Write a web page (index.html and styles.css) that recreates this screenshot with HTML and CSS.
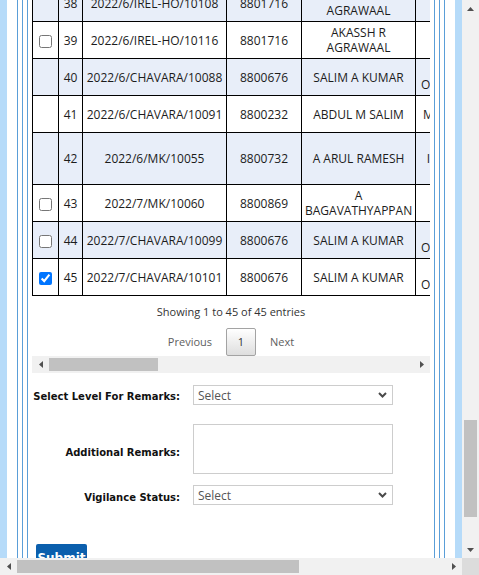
FILE: index.html
```html
<!DOCTYPE html>
<html lang="en">
<head>
<meta charset="utf-8">
<title>Vigilance Remarks</title>
<link rel="stylesheet" href="styles.css">
</head>
<body>
<div class="screen">
  <div class="page">
    <div class="sheet">
      <div class="box"><div class="box"><div class="box">
        <div class="grid-area">
          <div class="table-clip">
            <table class="grid">
              <colgroup>
                <col class="c-chk"><col class="c-no"><col class="c-ref"><col class="c-emp"><col class="c-name"><col class="c-desg">
              </colgroup>
              <tbody>
                <tr class="alt"><td></td><td>38</td><td>2022/6/IREL-HO/10108</td><td>8801716</td><td>AKASSH R AGRAWAAL</td><td></td></tr>
                <tr><td><input type="checkbox"></td><td>39</td><td>2022/6/IREL-HO/10116</td><td>8801716</td><td>AKASSH R AGRAWAAL</td><td></td></tr>
                <tr class="alt"><td></td><td>40</td><td>2022/6/CHAVARA/10088</td><td>8800676</td><td>SALIM A KUMAR</td><td>CHAVARA<br>OFFICE SUPERINTENDENT</td></tr>
                <tr><td></td><td>41</td><td>2022/6/CHAVARA/10091</td><td>8800232</td><td>ABDUL M SALIM</td><td>MANAGER (OPERATIONS)</td></tr>
                <tr class="alt tall"><td></td><td>42</td><td>2022/6/MK/10055</td><td>8800732</td><td>A ARUL RAMESH</td><td>INSPECTOR (VIGILANCE)</td></tr>
                <tr><td><input type="checkbox"></td><td>43</td><td>2022/7/MK/10060</td><td>8800869</td><td>A BAGAVATHYAPPAN</td><td></td></tr>
                <tr class="alt"><td><input type="checkbox"></td><td>44</td><td>2022/7/CHAVARA/10099</td><td>8800676</td><td>SALIM A KUMAR</td><td>CHAVARA<br>OFFICE SUPERINTENDENT</td></tr>
                <tr><td><input type="checkbox" checked></td><td>45</td><td>2022/7/CHAVARA/10101</td><td>8800676</td><td>SALIM A KUMAR</td><td>CHAVARA<br>OFFICE SUPERINTENDENT</td></tr>
              </tbody>
            </table>
          </div>
          <div class="info">Showing 1 to 45 of 45 entries</div>
          <div class="paging">
            <a class="pg-btn disabled">Previous</a>
            <a class="pg-btn current">1</a>
            <a class="pg-btn disabled">Next</a>
          </div>
          <div class="hbar inner-bar">
            <span class="arrow"><svg width="4" height="7" viewBox="0 0 4 7"><polygon points="4,0 4,7 0,3.5" fill="#505050"/></svg></span>
            <span class="htrack"><span class="hthumb inner-thumb"></span></span>
            <span class="arrow"><svg width="4" height="7" viewBox="0 0 4 7"><polygon points="0,0 0,7 4,3.5" fill="#505050"/></svg></span>
          </div>
        </div>
        <form class="form">
          <div class="form-row r1">
            <label>Select Level For Remarks:</label>
            <span class="select-wrap">
              <select><option>Select</option></select>
              <svg class="chev" width="9" height="6" viewBox="0 0 9 6"><polyline points="1,1 4.5,4.5 8,1" fill="none" stroke="#4a4a4a" stroke-width="2"/></svg>
            </span>
          </div>
          <div class="form-row r2">
            <label>Additional Remarks:</label>
            <textarea></textarea>
          </div>
          <div class="form-row r3">
            <label>Vigilance Status:</label>
            <span class="select-wrap">
              <select><option>Select</option></select>
              <svg class="chev" width="9" height="6" viewBox="0 0 9 6"><polyline points="1,1 4.5,4.5 8,1" fill="none" stroke="#4a4a4a" stroke-width="2"/></svg>
            </span>
          </div>
          <button type="button" class="btn-submit">Submit</button>
        </form>
      </div></div></div>
    </div>
  </div>
  <div class="vscroll">
    <span class="arrow"><svg width="7" height="4" viewBox="0 0 7 4"><polygon points="0,4 3.5,0 7,4" fill="#505050"/></svg></span>
    <span class="vtrack"><span class="vthumb"></span></span>
    <span class="arrow"><svg width="7" height="4" viewBox="0 0 7 4"><polygon points="0,0 7,0 3.5,4" fill="#505050"/></svg></span>
  </div>
  <div class="hbar page-bar">
    <span class="arrow"><svg width="4" height="7" viewBox="0 0 4 7"><polygon points="4,0 4,7 0,3.5" fill="#505050"/></svg></span>
    <span class="htrack"><span class="hthumb page-thumb"></span></span>
    <span class="arrow"><svg width="4" height="7" viewBox="0 0 4 7"><polygon points="0,0 0,7 4,3.5" fill="#505050"/></svg></span>
  </div>
  <div class="corner"></div>
</div>
</body>
</html>
```

FILE: styles.css
```css
html, body {
  margin: 0;
  padding: 0;
}
body {
  width: 479px;
  height: 575px;
  overflow: hidden;
  font-family: "Open Sans", "Liberation Sans", sans-serif;
  background: #fff;
}
.screen {
  display: grid;
  grid-template-columns: 462px 17px;
  grid-template-rows: 558px 17px;
  width: 479px;
  height: 575px;
}
.page {
  overflow: hidden;
  background: #b6dbf9;
  padding: 0 7px;
}
.sheet {
  background: #fff;
  padding: 0 10px;
  min-height: 100%;
}
.box {
  border-left: 1px solid #5a9ed8;
  border-right: 1px solid #5a9ed8;
  padding: 0 4px;
}

/* data table */
.table-clip {
  overflow: hidden;
  margin-top: -16px;
}
.grid {
  border-collapse: collapse;
  table-layout: fixed;
  width: 539px;
  font-size: 12px;
  line-height: 15px;
  color: #1c1c1c;
}
.c-chk { width: 26px; }
.c-no { width: 24px; }
.c-ref { width: 144px; }
.c-emp { width: 75px; }
.c-name { width: 114px; }
.c-desg { width: 156px; }
.grid td {
  border: 1px solid #000;
  padding: 3px;
  height: 30px;
  text-align: center;
  vertical-align: middle;
  white-space: normal;
}
.grid tr.alt td {
  background: #e8eef9;
}
.grid tr.tall td {
  height: 45px;
}
.grid input[type="checkbox"] {
  margin: 0;
  vertical-align: middle;
}

.info {
  margin-top: 8px;
  text-align: center;
  font-size: 11px;
  line-height: 16px;
  color: #333;
}
.paging {
  display: flex;
  justify-content: center;
  gap: 1px;
  margin-top: 8px;
  height: 28px;
}
.pg-btn {
  display: block;
  padding: 0 12px;
  border: 1px solid transparent;
  border-radius: 2px;
  font-size: 11px;
  line-height: 26px;
  color: #5e5e5e;
}
.pg-btn.current {
  width: 28px;
  padding: 0;
  text-align: center;
  color: #333;
  border-color: #a3a3a3;
  background: linear-gradient(to bottom, #ffffff 0%, #dedede 100%);
}

/* scrollbars */
.hbar {
  display: flex;
  align-items: center;
  height: 17px;
  background: #f1f1f1;
}
.arrow {
  display: flex;
  align-items: center;
  justify-content: center;
  width: 17px;
  height: 17px;
  flex: none;
}
.htrack {
  flex: 1;
  display: flex;
  align-items: center;
  height: 17px;
}
.hthumb {
  display: block;
  height: 13px;
  background: #c1c1c1;
}
.inner-thumb { width: 109px; }
.page-thumb { width: 282px; }
.vscroll {
  display: flex;
  flex-direction: column;
  background: #f1f1f1;
}
.vtrack {
  flex: 1;
}
.vthumb {
  display: block;
  width: 13px;
  height: 97px;
  margin: 403px auto 0;
  background: #c1c1c1;
}
.corner {
  background: #dcdcdc;
}

/* form */
.form {
  margin: 0;
  padding-top: 12px;
}
.form-row {
  display: flex;
  align-items: center;
}
.form-row label {
  width: 148px;
  margin-right: 13px;
  text-align: right;
  font-family: "DejaVu Sans", sans-serif;
  font-weight: bold;
  font-size: 10px;
  line-height: 12px;
  color: #111;
}
.r1 label { padding-top: 4px; }
.r2 { margin-top: 19px; }
.r2 label { padding-top: 8px; }
.r3 { margin-top: 11px; }
.r3 label { padding-top: 6px; }
.select-wrap {
  position: relative;
  display: block;
}
.select-wrap select {
  display: block;
  appearance: none;
  -webkit-appearance: none;
  width: 200px;
  height: 20px;
  margin: 0;
  padding: 0 4px;
  border: 1px solid #cdcdcd;
  border-radius: 0;
  background: #fff;
  font-family: "Open Sans", sans-serif;
  font-size: 12px;
  color: #555;
}
.chev {
  position: absolute;
  right: 6px;
  top: 7px;
  pointer-events: none;
}
.form textarea {
  display: block;
  box-sizing: border-box;
  width: 200px;
  height: 50px;
  margin: 0;
  border: 1px solid #cdcdcd;
  resize: none;
}
.btn-submit {
  display: block;
  margin: 39px 0 0 4px;
  width: 51px;
  padding: 7px 0 9px;
  border: 0;
  border-radius: 2px;
  background: #0b5fad;
  color: #fff;
  font-family: "DejaVu Sans", sans-serif;
  font-weight: bold;
  font-size: 12px;
  line-height: 14px;
  text-align: center;
}
```
